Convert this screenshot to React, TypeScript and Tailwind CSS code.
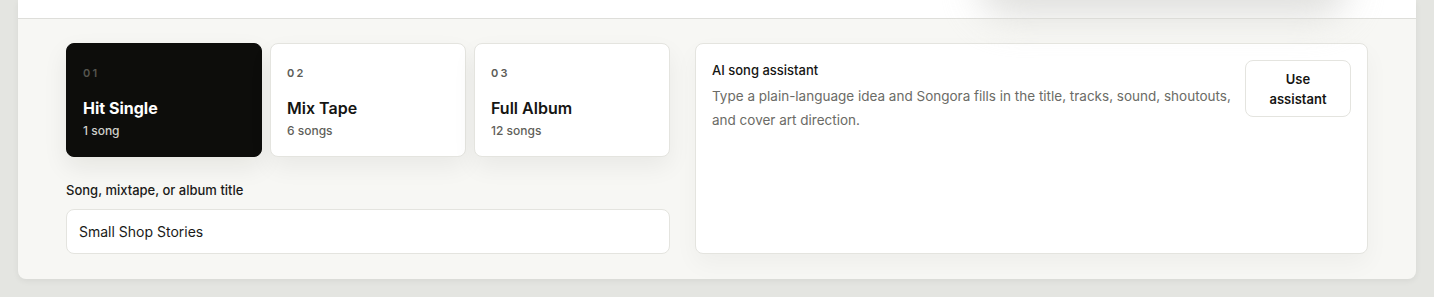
import React from 'react';

interface Format {
  num: string;
  title: string;
  count: string;
}

const formats: Format[] = [
  { num: '01', title: 'Hit Single', count: '1 song' },
  { num: '02', title: 'Mix Tape', count: '6 songs' },
  { num: '03', title: 'Full Album', count: '12 songs' },
];

const FormatCard: React.FC<{ format: Format; active: boolean }> = ({ format, active }) => (
  <button
    className={
      active
        ? 'flex flex-col items-start text-left rounded-lg border border-[#0d0d0b] bg-[#0d0d0b] px-4 pt-[21px] pb-[17px] shadow-[0_10px_24px_rgba(20,20,15,0.08)]'
        : 'flex flex-col items-start text-left rounded-lg border border-[#e4e4df] bg-white px-4 pt-[21px] pb-[17px] shadow-[0_10px_24px_rgba(20,20,15,0.06)]'
    }
  >
    <span
      className={
        active
          ? 'text-[11px] leading-4 font-semibold tracking-[0.2em] text-[#55554f]'
          : 'text-[11px] leading-4 font-semibold tracking-[0.2em] text-[#5c5c57]'
      }
    >
      {format.num}
    </span>
    <span
      className={
        active
          ? 'mt-[15px] text-base leading-6 font-bold text-white'
          : 'mt-[15px] text-base leading-6 font-semibold text-[#151513]'
      }
    >
      {format.title}
    </span>
    <span
      className={
        active
          ? 'mt-[3px] text-xs leading-4 font-medium text-[#cfcfca]'
          : 'mt-[3px] text-xs leading-4 font-medium text-[#5f5f5a]'
      }
    >
      {format.count}
    </span>
  </button>
);

export default function App() {
  return (
    <div className="relative h-[297px] w-full overflow-hidden bg-[#e4e5e1] px-[18px] font-['Inter',sans-serif]">
      <div className="relative overflow-hidden rounded-b-lg bg-[#f7f7f4] shadow-[0_2px_6px_rgba(0,0,0,0.06)]">
        {/* tail of header section */}
        <div className="h-[19px] border-b border-[#dededa] bg-white"></div>
        {/* soft shadow of a floating element above */}
        <div className="pointer-events-none absolute -top-[46px] left-[960px] h-[64px] w-[370px] rounded-full bg-[#d9d9d6] opacity-80 blur-[18px]"></div>

        <div className="flex gap-[25px] px-12 pt-6 pb-[25px]">
          <div className="w-[604px] shrink-0">
            <div className="grid grid-cols-3 gap-2">
              {formats.map((f, i) => (
                <FormatCard key={f.num} format={f} active={i === 0} />
              ))}
            </div>
            <label className="mt-[23px] block text-[13px] leading-5 font-medium text-[#1a1a18]">
              Song, mixtape, or album title
            </label>
            <div className="mt-[9px] flex h-[45px] items-center rounded-lg border border-[#e4e4df] bg-white px-3 text-sm text-[#1a1a18]">
              Small Shop Stories
            </div>
          </div>

          <div className="flex flex-1 items-start gap-3 rounded-lg border border-[#e4e4df] bg-white px-4 pt-4 pb-4 shadow-[0_10px_24px_rgba(20,20,15,0.04)]">
            <div className="flex-1">
              <div className="text-[13px] leading-5 font-medium text-[#151513]">AI song assistant</div>
              <p className="mt-1 text-[13.5px] leading-6 text-[#6b6b66]">
                Type a plain-language idea and Songora fills in the title, tracks, sound, shoutouts,
                and cover art direction.
              </p>
            </div>
            <button className="w-[106px] shrink-0 rounded-lg border border-[#e4e4df] bg-white pt-2 pb-[7px] text-[13px] leading-5 font-semibold text-[#151513]">
              Use
              <br />
              assistant
            </button>
          </div>
        </div>
      </div>
    </div>
  );
}
